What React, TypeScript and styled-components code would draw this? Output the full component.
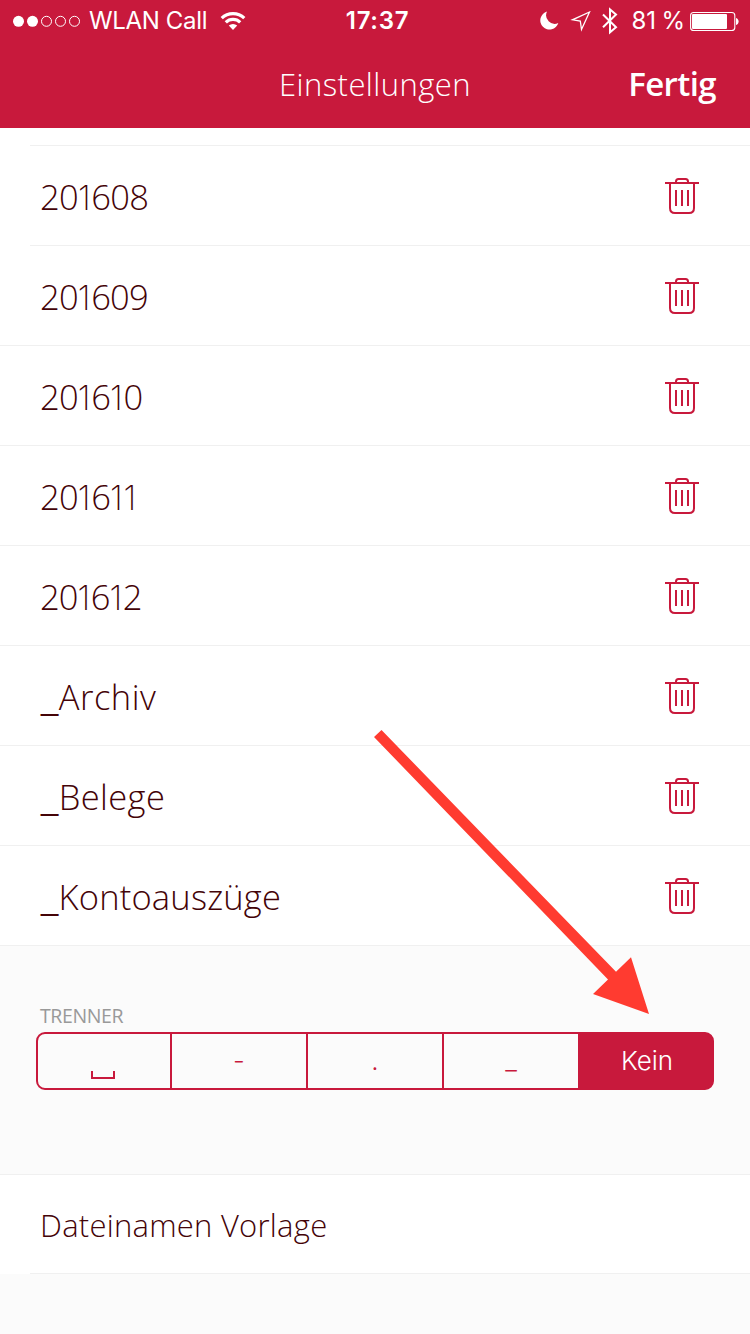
import React from 'react';
import styled, { createGlobalStyle } from 'styled-components';

const red = '#c8193c';
const line = '#f0f0f0';
const ink = '#440307';

const GlobalStyle = createGlobalStyle`
  * { box-sizing: border-box; }
  body { margin: 0; background: #fbfbfb; }
`;

const Screen = styled.div`
  position: relative;
  width: 750px;
  height: 1334px;
  overflow: hidden;
  background: #fbfbfb;
  font-family: 'Open Sans', sans-serif;
  font-weight: 300;
  color: ${ink};
`;

const Header = styled.header`
  height: 128px;
  background: ${red};
  color: #fff;
`;

const StatusBar = styled.div`
  display: grid;
  grid-template-columns: 1fr auto 1fr;
  height: 40px;
  align-items: center;
  padding: 0 10px 0 12px;
  font-family: Inter, sans-serif;
  font-size: 24px;
  font-weight: 400;
  line-height: 42px;
`;

const StatusGroup = styled.div<{ $end?: boolean }>`
  display: flex;
  align-items: center;
  justify-content: ${p => (p.$end ? 'flex-end' : 'flex-start')};
  height: 40px;
  white-space: nowrap;
  svg { flex: none; display: block; }
`;

const Carrier = styled.span`
  margin-left: 8px;
  width: 131px;
  letter-spacing: -0.35px;
`;

const Clock = styled.span`
  padding-left: 3px;
  font-weight: 600;
  letter-spacing: 0.7px;
`;

const Indicators = styled.span`
  display: flex;
  align-items: center;
  gap: 11px;
`;

const Percent = styled.span`
  margin: 0 5px 0 13px;
  letter-spacing: -0.1px;
  word-spacing: -1px;
`;

const NavBar = styled.div`
  display: grid;
  grid-template-columns: 1fr auto 1fr;
  align-items: center;
  height: 88px;
  padding-right: 34px;
  padding-left: 34px;
`;

const Title = styled.h1`
  grid-column: 2;
  margin: 0;
  font-size: 31px;
  font-weight: 300;
  letter-spacing: 0.45px;
  line-height: 88px;
`;

const Done = styled.button`
  justify-self: end;
  padding: 0;
  border: 0;
  background: none;
  color: #fff;
  font: inherit;
  font-size: 33px;
  font-weight: 600;
  letter-spacing: -0.6px;
  line-height: 84px;
`;

const List = styled.ul`
  margin: 0;
  padding: 0;
  list-style: none;
  background: #fff;
`;

const Row = styled.li<{ $inset?: boolean; $height?: number }>`
  display: flex;
  align-items: center;
  justify-content: space-between;
  height: ${p => p.$height ?? 100}px;
  padding: 0 50px 0 40px;
  background: linear-gradient(${line}, ${line}) ${p => (p.$inset ? '30px' : '0')} 100% / 100% 1px no-repeat;
`;

const Label = styled.span<{ $size?: number; $spacing?: number }>`
  padding-top: ${p => (p.$size ? 0 : 1)}px;
  font-size: ${p => p.$size ?? 34.5}px;
  letter-spacing: ${p => p.$spacing ?? 0}px;
  line-height: 60px;
  white-space: nowrap;
`;

const NarrowOne = styled.span`
  font-family: Inter, sans-serif;
  font-size: 33.5px;
  font-weight: 200;
  letter-spacing: 0.6px;
  line-height: 1;
`;

const WideUnderscore = styled.span`
  margin-left: 1px;
  font-family: 'Liberation Sans', sans-serif;
  font-size: 31px;
  line-height: 1;
`;

const IconButton = styled.button`
  display: flex;
  padding: 0;
  border: 0;
  background: none;
`;

const Section = styled.section`
  height: 228px;
  padding: 58px 36px 0;
`;

const Caption = styled.h2`
  height: 28px;
  margin: 0 0 0 4px;
  font-size: 19.5px;
  font-weight: 400;
  letter-spacing: -0.4px;
  line-height: 23px;
  color: #999;
`;

const Segments = styled.div`
  display: flex;
  height: 58px;
  border: 2px solid ${red};
  border-radius: 9px;
`;

const Segment = styled.button<{ $active?: boolean; $width: number }>`
  display: flex;
  align-items: center;
  justify-content: center;
  width: ${p => p.$width}px;
  padding: 0 0 0 ${p => (p.$active ? 2 : 0)}px;
  border: 0;
  border-right: ${p => (p.$active ? '0' : `2px solid ${red}`)};
  border-radius: ${p => (p.$active ? '0 7px 7px 0' : '0')};
  box-shadow: ${p => (p.$active ? `0 0 0 1px ${red}` : 'none')};
  background: ${p => (p.$active ? red : 'transparent')};
  color: ${p => (p.$active ? '#fff' : red)};
  font: 300 26px/54px Inter, sans-serif;
`;

const Template = styled.div`
  border-top: 1px solid ${line};
`;

const Pointer = styled.svg`
  position: absolute;
  left: 370px;
  top: 725px;
`;

const Signal = () => (
  <svg width="69" height="12" viewBox="0 0 69 12" fill="none" stroke="#fff">
    <circle cx="6.5" cy="6.3" r="5.5" fill="#fff" stroke="none" />
    <circle cx="20.5" cy="6.3" r="5.5" fill="#fff" stroke="none" />
    {[34.5, 48.5, 62.5].map(x => <circle key={x} cx={x} cy="6.3" r="5" />)}
  </svg>
);

const Wifi = () => (
  <svg width="26" height="20" viewBox="0 0 26 20" fill="none" stroke="#fff" strokeWidth="3.2">
    <path d="M1.7 7.2a16.2 16.2 0 0 1 22.6 0" />
    <path d="M5.8 11.4a10.3 10.3 0 0 1 14.4 0" />
    <path d="M13 19l-4.2-4.4a6 6 0 0 1 8.4 0z" fill="#fff" stroke="none" />
  </svg>
);

const Moon = () => (
  <svg width="19" height="20" viewBox="0 0 19 20">
    <path d="M7 .5A9.2 9.2 0 1 0 18.3 12 8.6 8.6 0 0 1 7 .5z" fill="#fff" />
  </svg>
);

const Location = () => (
  <svg width="21" height="21" viewBox="0 0 21 21" fill="none" stroke="#fff" strokeWidth="1.3">
    <path d="M19.500 1L2.500 8.800L10.300 10L11.500 18.500z" />
  </svg>
);

const Bluetooth = () => (
  <svg width="16" height="28" viewBox="0 0 16 28" fill="none" stroke="#fff" strokeWidth="2">
    <path d="M1 7.500L14 20.200L8 25.300V2.500L14 7.500L1 20.200" />
  </svg>
);

const Battery = () => (
  <svg width="50" height="20" viewBox="0 0 50 20">
    <rect x=".6" y="1.5" width="44.2" height="18" rx="3" fill="none" stroke="#fff" strokeWidth="1.1" />
    <rect x="2" y="3" width="35" height="15" rx="1" fill="#fff" />
    <path d="M46 7c3.500 1 3.500 6 0 7z" fill="#fff" />
  </svg>
);

const Trash = () => (
  <svg width="36" height="38" viewBox="0 0 36 38" fill="none" stroke={red} strokeWidth="2">
    <path d="M1 6h34M12 6V4.5Q12 2 14.5 2h7Q24 2 24 4.5V6M6 6v25q0 5 5 5h14q5 0 5-5V6M12 13v16M18 13v16M24 13v16" />
  </svg>
);

const SpaceMark = () => (
  <svg width="26" height="54" viewBox="0 0 26 54" fill="none" stroke={red} strokeWidth="2">
    <path d="M1 37v7h22v-7" />
  </svg>
);

const FolderName = ({ name }: { name: string }) => (
  <>
    {name.split(/([1_])/).map((part, i) => {
      if (part === '1') return <NarrowOne key={i}>1</NarrowOne>;
      if (part === '_') return <WideUnderscore key={i}>_</WideUnderscore>;
      return part;
    })}
  </>
);

const folders = [
  { name: '201608', inset: true, spacing: -0.7 },
  { name: '201609', spacing: -0.8 },
  { name: '201610', spacing: -0.8 },
  { name: '201611', spacing: -0.8 },
  { name: '201612', spacing: -1 },
  { name: '_Archiv', spacing: 0.5 },
  { name: '_Belege', spacing: 0.4 },
  { name: '_Kontoauszüge', spacing: 0.2 },
];

export default function App() {
  return (
    <Screen>
      <GlobalStyle />
      <Header>
        <StatusBar>
          <StatusGroup>
            <Signal />
            <Carrier>WLAN Call</Carrier>
            <Wifi />
          </StatusGroup>
          <Clock>17:37</Clock>
          <StatusGroup $end>
            <Indicators>
              <Moon />
              <Location />
              <Bluetooth />
            </Indicators>
            <Percent>81 %</Percent>
            <Battery />
          </StatusGroup>
        </StatusBar>
        <NavBar>
          <Title>Einstellungen</Title>
          <Done>Fertig</Done>
        </NavBar>
      </Header>
      <List>
        <Row $inset $height={18} />
        {folders.map(f => (
          <Row key={f.name} $inset={f.inset}>
            <Label $spacing={f.spacing}><FolderName name={f.name} /></Label>
            <IconButton aria-label="Löschen"><Trash /></IconButton>
          </Row>
        ))}
      </List>
      <Section>
        <Caption>TRENNER</Caption>
        <Segments>
          <Segment $width={134}><SpaceMark /></Segment>
          <Segment $width={136}>-</Segment>
          <Segment $width={136}>.</Segment>
          <Segment $width={136}>_</Segment>
          <Segment $width={132} $active>Kein</Segment>
        </Segments>
      </Section>
      <Template>
        <List>
          <Row $inset $height={99}>
            <Label $size={31} $spacing={0.25}>Dateinamen Vorlage</Label>
          </Row>
        </List>
      </Template>
      <Pointer width="285" height="295" viewBox="370 725 285 295">
        <path d="M374 737L381.500 730L616 971.700L631 957.300L649 1014L593 994L608 979.500Z" fill="#ff3b30" />
      </Pointer>
    </Screen>
  );
}
